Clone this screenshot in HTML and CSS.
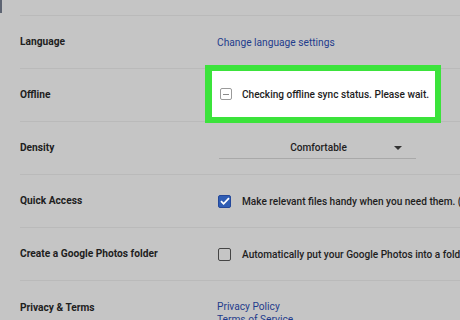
FILE: index.html
```html
<!DOCTYPE html>
<html lang="en">
<head>
  <meta charset="UTF-8" />
  <title>Settings</title>
  <link rel="stylesheet" href="styles.css">
</head>
<body>
  <div class="settings">
    <!-- Top of the list, the previous row ends here -->
    <div class="top-edge"><div class="nav-sliver"></div></div>

    <div class="row">
      <div class="label">Language</div>
      <div class="value"><a class="link" href="#">Change language settings</a></div>
    </div>

    <div class="row">
      <div class="label">Offline</div>
      <div class="value">
        <div class="highlight">
          <span class="box box-pending"></span>
          <span class="text">Checking offline sync status. Please wait.</span>
        </div>
      </div>
    </div>

    <div class="row">
      <div class="label">Density</div>
      <div class="value">
        <div class="dropdown">
          <span class="dropdown-text">Comfortable</span>
          <span class="dropdown-arrow"></span>
        </div>
      </div>
    </div>

    <div class="row">
      <div class="label">Quick Access</div>
      <div class="value">
        <span class="box box-checked">
          <svg viewBox="0 0 14 14" width="14" height="14"><path d="M3 7.2l2.6 2.6L11 4.2" fill="none" stroke="#fff" stroke-width="1.8"/></svg>
        </span>
        <span class="text">Make relevant files handy when you need them. (Recommended)</span>
      </div>
    </div>

    <div class="row">
      <div class="label">Create a Google Photos folder</div>
      <div class="value">
        <span class="box"></span>
        <span class="text">Automatically put your Google Photos into a folder in My Drive</span>
      </div>
    </div>

    <div class="row row-top">
      <div class="label">Privacy &amp; Terms</div>
      <div class="value links">
        <a class="link" href="#">Privacy Policy</a>
        <a class="link" href="#">Terms of Service</a>
      </div>
    </div>
  </div>
</body>
</html>
```

FILE: styles.css
```css
body {
  margin: 0;
  background-color: #c5c5c5;
  font-family: Roboto, "Liberation Sans", sans-serif;
  color: #1e1e1e;
  height: 320px;
  overflow: hidden;
}
.settings {
  width: 460px;
}
.top-edge {
  height: 15px;
}
.nav-sliver {
  width: 2px;
  height: 13px;
  background-color: #5d6472;
}
/* Each setting row */
.row {
  display: flex;
  align-items: center;
  height: 52px;
  margin-left: 20px;
  border-top: 1px solid #bababa;
}
.label {
  width: 197px;
  flex-shrink: 0;
  font-size: 10.2px;
  font-weight: 700;
  line-height: 14px;
}
.value {
  display: flex;
  align-items: center;
  white-space: nowrap;
  font-size: 10.1px;
  font-weight: 500;
}
.link {
  color: #1f3c8c;
  text-decoration: none;
  font-weight: 400;
  font-size: 10.2px;
  line-height: 13px;
}
.text {
  margin-left: 11px;
}
/* Checkboxes */
.box {
  display: inline-block;
  width: 11px;
  height: 11px;
  margin-left: 1px;
  border: 1.5px solid #454545;
  border-radius: 2px;
  flex-shrink: 0;
}
.box-checked {
  background-color: #2f5db4;
  border-color: #24489a;
}
.box-checked svg {
  display: block;
  margin: -1.5px;
}
.box-pending {
  width: 10px;
  height: 10px;
  border: 1px solid #9a9a9a;
  position: relative;
}
.box-pending::after {
  content: "";
  position: absolute;
  left: 2px;
  right: 2px;
  top: 5px;
  height: 1px;
  background-color: #8a8a8a;
}
/* Green highlight round the offline status */
.highlight {
  display: flex;
  align-items: center;
  box-sizing: border-box;
  width: 236px;
  height: 58px;
  margin-left: -12px;
  margin-top: -2px;
  padding-left: 7px;
  background-color: #fff;
  border: 6px solid #3be33b;
  border-left-width: 7px;
}
.highlight .text {
  margin-left: 10px;
}
/* Density dropdown */
.dropdown {
  display: flex;
  align-items: center;
  width: 197px;
  height: 21px;
  margin-left: 2px;
  border-bottom: 1px solid #a9a9a9;
}
.dropdown-text {
  flex: 1;
  text-align: center;
  padding-left: 24px;
  font-weight: 500;
}
.dropdown-arrow {
  width: 0;
  height: 0;
  margin-right: 14px;
  border-left: 4px solid transparent;
  border-right: 4px solid transparent;
  border-top: 4px solid #333;
}
/* Privacy row: links stack from the top */
.row-top {
  align-items: flex-start;
}
.row-top .label {
  padding-top: 20px;
}
.links {
  flex-direction: column;
  align-items: flex-start;
  padding-top: 19px;
}
```
